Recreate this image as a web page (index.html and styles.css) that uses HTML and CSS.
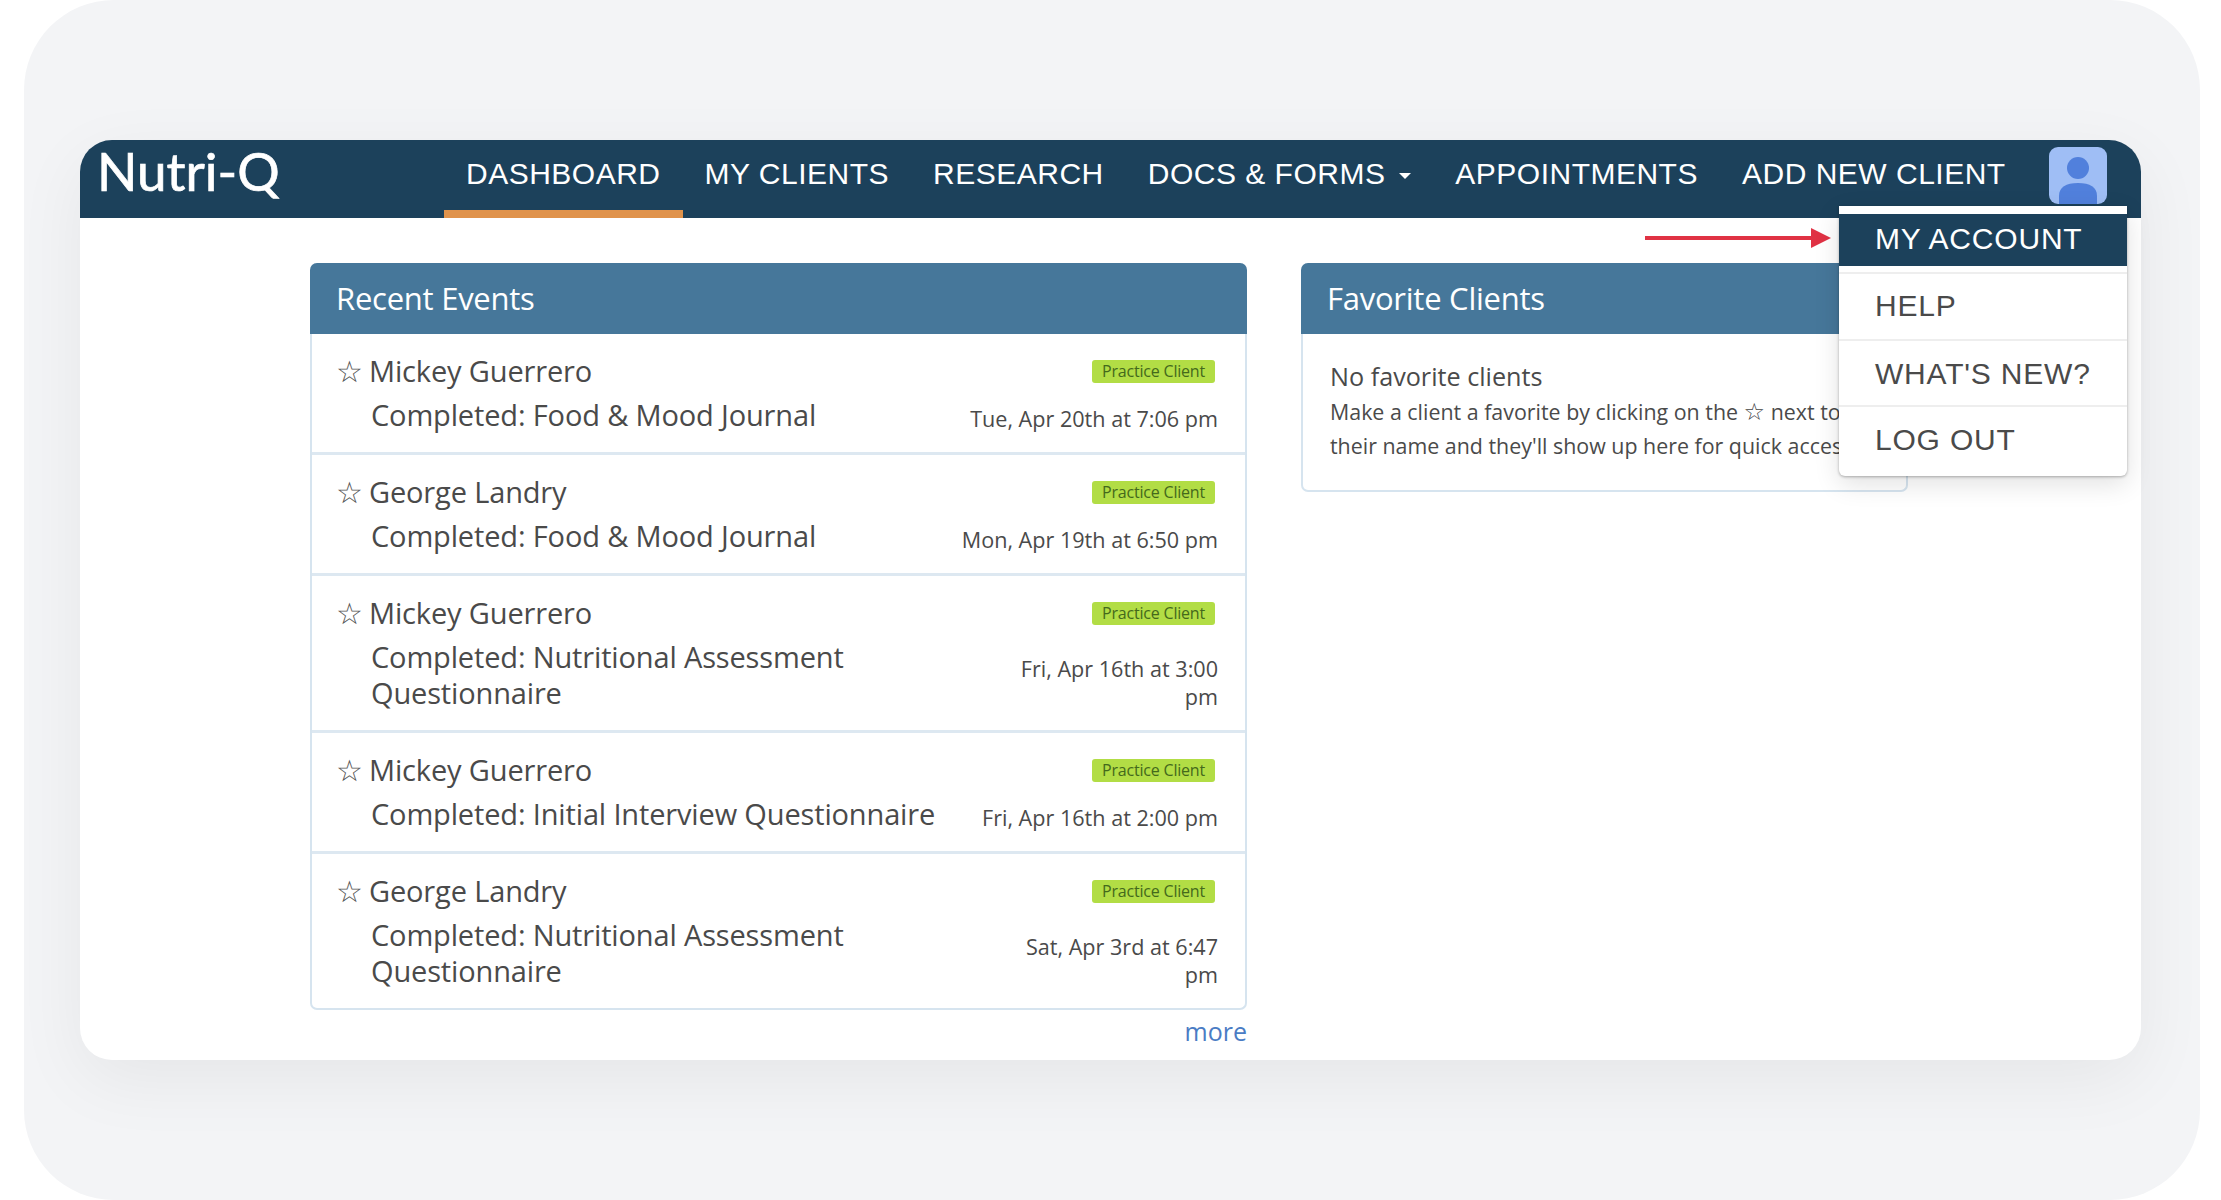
FILE: index.html
```html
<!DOCTYPE html>
<html lang="en">
<head>
    <meta charset="UTF-8">
    <title>Nutri-Q</title>
    <link rel="stylesheet" href="styles.css">
</head>
<body>
    <div class="stage">
        <div class="app">
            <div class="navbar">
                <div class="logo">Nutri-Q</div>
                <div class="nav-links">
                    <a class="nav-link active">DASHBOARD</a>
                    <a class="nav-link">MY CLIENTS</a>
                    <a class="nav-link">RESEARCH</a>
                    <a class="nav-link">DOCS &amp; FORMS <span class="caret"></span></a>
                    <a class="nav-link">APPOINTMENTS</a>
                    <a class="nav-link">ADD NEW CLIENT</a>
                </div>
                <div class="avatar">
                    <svg width="58" height="57" viewBox="0 0 58 57">
                        <circle cx="29" cy="21" r="11" fill="#5180dc"/>
                        <path d="M10 57V49C10 40 17 36 29 36C41 36 48 40 48 49V57Z" fill="#5180dc"/>
                    </svg>
                </div>
            </div>

            <div class="content">
                <div class="events-col">
                    <div class="panel">
                        <div class="panel-title">Recent Events</div>
                        <div class="event">
                            <div class="event-top">
                                <div class="event-name"><span class="star">☆</span>Mickey Guerrero</div>
                                <span class="badge">Practice Client</span>
                            </div>
                            <div class="event-bottom">
                                <div class="event-desc">Completed: Food &amp; Mood Journal</div>
                                <div class="event-date">Tue, Apr 20th at 7:06 pm</div>
                            </div>
                        </div>
                        <div class="event">
                            <div class="event-top">
                                <div class="event-name"><span class="star">☆</span>George Landry</div>
                                <span class="badge">Practice Client</span>
                            </div>
                            <div class="event-bottom">
                                <div class="event-desc">Completed: Food &amp; Mood Journal</div>
                                <div class="event-date">Mon, Apr 19th at 6:50 pm</div>
                            </div>
                        </div>
                        <div class="event">
                            <div class="event-top">
                                <div class="event-name"><span class="star">☆</span>Mickey Guerrero</div>
                                <span class="badge">Practice Client</span>
                            </div>
                            <div class="event-bottom">
                                <div class="event-desc">Completed: Nutritional Assessment<br>Questionnaire</div>
                                <div class="event-date">Fri, Apr 16th at 3:00<br>pm</div>
                            </div>
                        </div>
                        <div class="event">
                            <div class="event-top">
                                <div class="event-name"><span class="star">☆</span>Mickey Guerrero</div>
                                <span class="badge">Practice Client</span>
                            </div>
                            <div class="event-bottom">
                                <div class="event-desc">Completed: Initial Interview Questionnaire</div>
                                <div class="event-date">Fri, Apr 16th at 2:00 pm</div>
                            </div>
                        </div>
                        <div class="event">
                            <div class="event-top">
                                <div class="event-name"><span class="star">☆</span>George Landry</div>
                                <span class="badge">Practice Client</span>
                            </div>
                            <div class="event-bottom">
                                <div class="event-desc">Completed: Nutritional Assessment<br>Questionnaire</div>
                                <div class="event-date">Sat, Apr 3rd at 6:47<br>pm</div>
                            </div>
                        </div>
                    </div>
                    <a class="more-link">more</a>
                </div>

                <div class="panel favorites">
                    <div class="panel-title">Favorite Clients</div>
                    <div class="favorites-body">
                        <div class="favorites-head">No favorite clients</div>
                        <div class="favorites-text">Make a client a favorite by clicking on the <span class="star-small">☆</span> next to<br>their name and they'll show up here for quick access.</div>
                    </div>
                </div>
            </div>

            <!-- annotation arrow pointing at the menu -->
            <svg class="arrow" width="186" height="20" viewBox="0 0 186 20">
                <path d="M0 10H168" stroke="#e03244" stroke-width="4"/>
                <path d="M166 0L186 10L166 20Z" fill="#e03244"/>
            </svg>

            <div class="user-menu">
                <a class="menu-item selected">MY ACCOUNT</a>
                <a class="menu-item">HELP</a>
                <a class="menu-item">WHAT'S NEW?</a>
                <a class="menu-item">LOG OUT</a>
            </div>
        </div>
    </div>
</body>
</html>
```

FILE: styles.css
```css
body {
    margin: 0;
    background: white;
    font-family: "Open Sans", sans-serif;
    color: #4a4a4a;
}
.stage {
    box-sizing: border-box;
    width: 2176px;
    height: 1200px;
    margin-left: 24px;
    padding: 140px 56px 0;
    background: #f3f4f6;
    border-radius: 90px;
}
.app {
    position: relative;
    width: 2061px;
    height: 920px;
    background: white;
    border-radius: 32px;
    box-shadow: 0 20px 70px rgba(0,0,0,0.06);
}
.navbar {
    display: flex;
    align-items: flex-start;
    height: 78px;
    background: #1c415b;
    border-radius: 32px 32px 0 0;
}
.logo {
    width: 364px;
    padding-left: 17px;
    box-sizing: border-box;
    font-family: Lato, sans-serif;
    font-size: 53px;
    line-height: 62px;
    color: white;
    -webkit-text-stroke: 0.7px white;
}
.nav-links {
    display: flex;
    flex: 1;
}
.nav-link {
    display: block;
    height: 70px;
    padding: 0 22px;
    font-family: "Liberation Sans", Arial, sans-serif;
    font-size: 30px;
    line-height: 68px;
    letter-spacing: 0.5px;
    color: white;
    white-space: nowrap;
}
.nav-link.active {
    border-bottom: 8px solid #e0934c;
}
.caret {
    display: inline-block;
    width: 0;
    height: 0;
    margin-left: 5px;
    vertical-align: middle;
    border-left: 6px solid transparent;
    border-right: 6px solid transparent;
    border-top: 6px solid white;
}
.avatar {
    position: absolute;
    top: 7px;
    left: 1969px;
    width: 58px;
    height: 57px;
    background: #9fbef5;
    border-radius: 9px;
    overflow: hidden;
}
.content {
    display: flex;
    gap: 54px;
    padding: 45px 0 0 230px;
}
.events-col {
    width: 937px;
}
.panel {
    background: white;
    border: 2px solid #d6e4ef;
    border-top: none;
    border-radius: 7px;
}
.panel-title {
    height: 71px;
    margin: 0 -2px;
    padding-left: 26px;
    background: #46779a;
    border-radius: 7px 7px 0 0;
    font-size: 31px;
    font-weight: 500;
    line-height: 71px;
    letter-spacing: -0.25px;
    color: white;
}
.event {
    padding: 15px 27px 19px 26px;
    border-bottom: 3px solid #dde8f1;
}
.event:last-child {
    border-bottom: none;
}
.event-top {
    display: flex;
    justify-content: space-between;
    align-items: center;
    margin-bottom: 4px;
}
.event-name {
    font-size: 29px;
    line-height: 44px;
    letter-spacing: -0.15px;
}
.star {
    display: inline-block;
    width: 33px;
    margin-left: -2px;
    font-family: "DejaVu Sans", sans-serif;
    font-size: 30px;
    line-height: 30px;
    color: #555;
}
.badge {
    padding: 0 10px;
    height: 23px;
    margin-right: 3px;
    background: #b2dd45;
    border-radius: 3px;
    font-size: 16px;
    line-height: 23px;
    letter-spacing: -0.2px;
    color: #44691c;
}
.event-bottom {
    display: flex;
    justify-content: space-between;
    align-items: flex-end;
}
.event-desc {
    padding-left: 33px;
    font-size: 29px;
    line-height: 36px;
    letter-spacing: -0.15px;
}
.event-date {
    font-size: 21.6px;
    line-height: 28px;
    text-align: right;
    white-space: nowrap;
}
.more-link {
    display: block;
    margin-top: 3px;
    font-size: 25px;
    line-height: 36px;
    text-align: right;
    color: #4a7cc4;
}
.favorites {
    align-self: flex-start;
    width: 607px;
    box-sizing: border-box;
}
.favorites-body {
    height: 156px;
    padding: 24px 0 0 27px;
    box-sizing: border-box;
    white-space: nowrap;
    overflow: hidden;
}
.favorites-head {
    font-size: 25.2px;
    line-height: 37px;
}
.favorites-text {
    font-size: 21.4px;
    line-height: 34px;
}
.star-small {
    font-family: "DejaVu Sans", sans-serif;
    font-size: 24px;
    line-height: 24px;
    color: #444;
}
.arrow {
    position: absolute;
    top: 88px;
    left: 1565px;
}
.user-menu {
    position: absolute;
    top: 66px;
    left: 1759px;
    width: 288px;
    height: 270px;
    box-sizing: border-box;
    padding-top: 8px;
    background: white;
    border-radius: 0 0 6px 6px;
    box-shadow: 0 1px 3px rgba(0,0,0,0.3), 0 8px 26px rgba(0,0,0,0.12);
}
.menu-item {
    display: block;
    box-sizing: border-box;
    height: 66px;
    padding-left: 36px;
    font-family: "Liberation Sans", Arial, sans-serif;
    font-size: 30px;
    line-height: 66px;
    letter-spacing: 0.8px;
    color: #4a4a4a;
    border-bottom: 2px solid #eee;
}
.menu-item:last-child {
    border-bottom: none;
}
.menu-item:nth-child(2) {
    line-height: 62px;
}
.menu-item.selected {
    height: 52px;
    line-height: 50px;
    margin-bottom: 9px;
    background: #1c415b;
    color: white;
    border-bottom: none;
    box-shadow: 0 6px 0 white, 0 8px 0 #eee;
}
```
